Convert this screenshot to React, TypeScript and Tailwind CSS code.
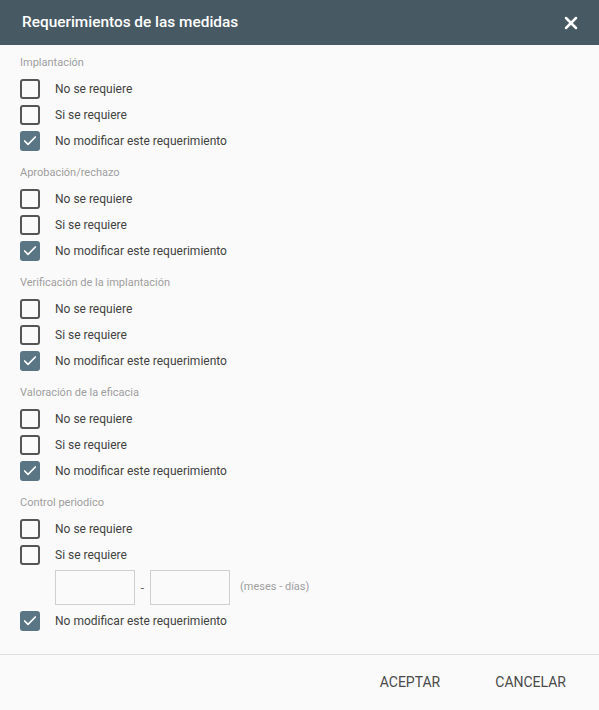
import { X, Check } from "lucide-react";

const sections = [
  "Implantación",
  "Aprobación/rechazo",
  "Verificación de la implantación",
  "Valoración de la eficacia",
];

function Box({ checked }: { checked?: boolean }) {
  return checked ? (
    <span className="flex h-5 w-5 items-center justify-center rounded-[3px] bg-[#5a7584]">
      <Check className="h-4 w-4 text-white" strokeWidth={2.5} />
    </span>
  ) : (
    <span className="h-5 w-5 rounded-[3px] border-2 border-[#555]" />
  );
}

function Row({ label, checked }: { label: string; checked?: boolean }) {
  return (
    <div className="flex h-[26px] items-center">
      <Box checked={checked} />
      <span className="ml-[15px] text-[12px] text-[#424242]">{label}</span>
    </div>
  );
}

export default function App() {
  return (
    <div
      className="flex h-[710px] w-[599px] flex-col bg-[#fafafa]"
      style={{ fontFamily: "Roboto, 'Liberation Sans', sans-serif" }}
    >
      {/* Header */}
      <div className="flex h-[45px] items-center justify-between bg-[#475a64] pl-[22px] pr-[18px]">
        <span className="text-[15.4px] font-medium text-white">Requerimientos de las medidas</span>
        <X className="h-5 w-5 text-white" strokeWidth={3} />
      </div>

      {/* Body */}
      <div className="flex-1 px-5 pt-[9px]">
        {sections.map((s) => (
          <div key={s} className="mb-[10px]">
            <div className="flex h-[18px] items-center text-[11px] text-[#9e9e9e]">{s}</div>
            <div className="mt-[4px]">
              <Row label="No se requiere" />
              <Row label="Si se requiere" />
              <Row label="No modificar este requerimiento" checked />
            </div>
          </div>
        ))}
        <div>
          <div className="flex h-[18px] items-center text-[11px] text-[#9e9e9e]">Control periodico</div>
          <div className="mt-[4px]">
            <Row label="No se requiere" />
            <Row label="Si se requiere" />
            <div className="flex items-center pb-[3px] pt-[2px] pl-[35px]">
              <input className="h-[35px] w-[80px] border border-[#cfcfcf] bg-[#fafafa] outline-none" />
              <span className="w-[15px] text-center text-[12px] text-[#616161]">-</span>
              <input className="h-[35px] w-[80px] border border-[#cfcfcf] bg-[#fafafa] outline-none" />
              <span className="ml-[10px] text-[11px] text-[#a0a0a0]">(meses - días)</span>
            </div>
            <Row label="No modificar este requerimiento" checked />
          </div>
        </div>
      </div>

      {/* Footer */}
      <div className="flex h-[56px] items-center justify-end gap-[55px] border-t border-[#e0e0e0] pr-[33px]">
        <button className="text-[14px] text-[#4a4a4a]">ACEPTAR</button>
        <button className="text-[14px] text-[#4a4a4a]">CANCELAR</button>
      </div>
    </div>
  );
}
